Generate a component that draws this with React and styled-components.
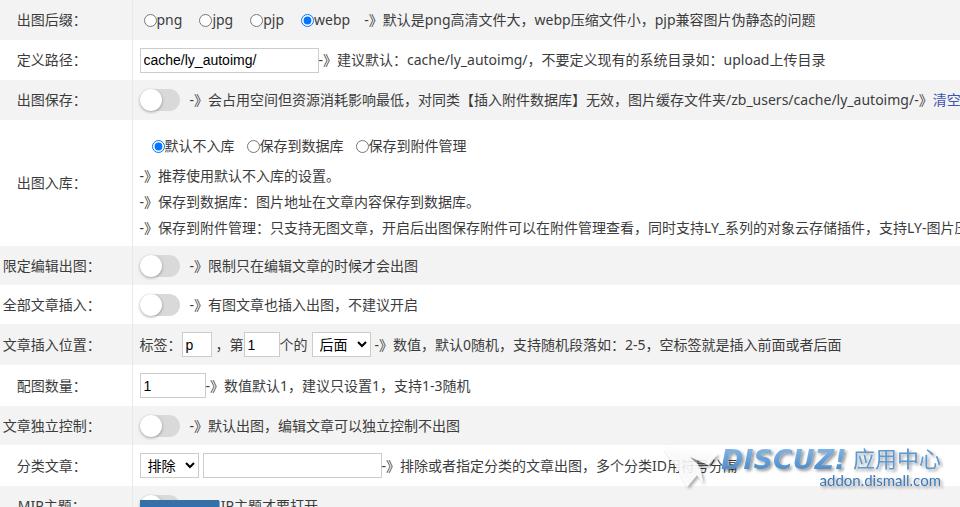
import React from 'react';
import styled, { createGlobalStyle } from 'styled-components';

const GlobalStyle = createGlobalStyle`
  body {
    margin: 0;
    overflow: hidden;
    background: #fff;
    color: #3c3c3c;
    font: 14px/20px "Noto Sans", "Noto Sans CJK SC", sans-serif;
  }
`;

const Table = styled.table`
  width: 100%;
  table-layout: fixed;
  border-collapse: collapse;
`;
const LabelColumn = styled.col`
  width: 132px;
`;
const Row = styled.tr`
  height: ${(p) => p.$height || 40}px;

  &:nth-child(odd) {
    background: #f3f3f3;
  }
`;
const LabelCell = styled.th`
  padding: 0 28px 0 0;
  border-right: 1px solid #e8e8e8;
  font-weight: 400;
  white-space: nowrap;
`;
const Cell = styled.td`
  padding: 0 0 0 7px;
  white-space: nowrap;
`;
const Line = styled.div`
  display: flex;
  align-items: center;
  gap: ${(p) => p.$gap || 0}px;
`;
const RadioGroup = styled.div`
  display: flex;
  align-items: center;
  gap: ${(p) => p.$gap}px;
  padding-left: ${(p) => p.$indent}px;
`;
const RadioLabel = styled.label`
  display: flex;
  align-items: center;

  input {
    width: 13px;
    height: 13px;
    margin: 0;
  }
`;
const Notes = styled.div`
  display: grid;
  gap: 6px;
  padding-top: 8px;

  ${RadioGroup} {
    padding-bottom: 4px;
  }
`;
const TextInput = styled.input`
  box-sizing: border-box;
  width: ${(p) => p.$width}px;
  height: 25px;
  padding: 0 3px;
  border: 1px solid #ccc;
  background: #fff;
  color: #000;
  font: 14px "Liberation Sans", sans-serif;
`;
const Select = styled.select`
  box-sizing: border-box;
  width: 59px;
  height: 25px;
  padding: 0 3px;
  border: 1px solid #ccc;
  border-radius: 0;
  background: #fff;
  color: #000;
  font: 14px "Liberation Sans", "Noto Sans CJK SC", sans-serif;
`;
const Switch = styled.input`
  appearance: none;
  display: flex;
  flex-shrink: 0;
  width: 40px;
  height: 22px;
  margin: 0;
  border-radius: 11px;
  background: #d9d9d9;

  &::before {
    content: '';
    width: 22px;
    height: 22px;
    border-radius: 50%;
    background: #fff;
    box-shadow: 0 1px 3px rgba(0, 0, 0, 0.35);
  }
  &:checked {
    justify-content: flex-end;
    background: #3a6ea5;
  }
`;
const Link = styled.a`
  color: #3a55b0;
  text-decoration: none;
`;
const SaveBar = styled.div`
  position: fixed;
  bottom: 0;
  left: 140px;
  height: 7px;
  overflow: hidden;
`;
const SaveButton = styled.button`
  width: 79px;
  height: 30px;
  border: 0;
  background: #3670a6;
`;
const Watermark = styled.svg`
  position: fixed;
  right: 10px;
  bottom: 10px;
  width: 290px;
  height: 54px;
  overflow: visible;
  pointer-events: none;
`;

const SwitchRow = ({ id, label, height = 39, children }) => (
  <Row $height={height}>
    <LabelCell scope="row"><label htmlFor={id}>{label}</label></LabelCell>
    <Cell>
      <Line $gap={10}>
        <Switch type="checkbox" role="switch" id={id} />
        <span>{children}</span>
      </Line>
    </Cell>
  </Row>
);

const Radios = ({ name, options, checked, gap, indent }) => (
  <RadioGroup role="radiogroup" $gap={gap} $indent={indent}>
    {options.map((option) => (
      <RadioLabel key={option}>
        <input type="radio" name={name} defaultChecked={option === checked} />
        {option}
      </RadioLabel>
    ))}
  </RadioGroup>
);

const AddonLogo = () => (
  <Watermark viewBox="0 0 290 54" aria-label="Discuz! 应用中心">
    <defs>
      <linearGradient id="brand" x1="0" y1="0" x2="0" y2="1">
        <stop offset="0" stopColor="#8dbde8" />
        <stop offset="1" stopColor="#4282c2" />
      </linearGradient>
      <filter id="shade" x="-10%" y="-20%" width="120%" height="150%">
        <feDropShadow dx="2" dy="2" stdDeviation="1.5" floodColor="#000" floodOpacity="0.4" />
      </filter>
    </defs>
    <g filter="url(#shade)">
      <path d="M3 5 L58 11 L48 22 L30 14 L40 24 L43 40 L37 32 L27 44 L18 27 Z" fill="#fff" fillOpacity="0.85" />
      <path d="M30 14 L48 22 L41 24 Z" fill="#555" fillOpacity="0.5" />
      <text x="61" y="26" fill="url(#brand)" fontFamily="DejaVu Sans, sans-serif" fontSize="27" fontWeight="700" fontStyle="italic">DISCUZ!</text>
      <text x="281" y="24" fill="#5b98d2" textAnchor="end" fontFamily="Noto Sans CJK SC, sans-serif" fontSize="22">应用中心</text>
      <text x="281" y="43" fill="#3e78b4" textAnchor="end" fontFamily="Lato, sans-serif" fontSize="15">addon.dismall.com</text>
    </g>
  </Watermark>
);

const App = () => (
  <>
    <GlobalStyle />
    <form>
      <Table>
        <colgroup>
          <LabelColumn />
          <col />
        </colgroup>
        <tbody>
          <Row>
            <LabelCell scope="row">出图后缀：</LabelCell>
            <Cell>
              <Line $gap={14}>
                <Radios name="suffix" options={['png', 'jpg', 'pjp', 'webp']} checked="webp" gap={17} indent={4} />
                <span>-》默认是png高清文件大，webp压缩文件小，pjp兼容图片伪静态的问题</span>
              </Line>
            </Cell>
          </Row>
          <Row>
            <LabelCell scope="row"><label htmlFor="path">定义路径：</label></LabelCell>
            <Cell>
              <Line>
                <TextInput id="path" $width={179} defaultValue="cache/ly_autoimg/" />
                <span>-》建议默认：cache/ly_autoimg/，不要定义现有的系统目录如：upload上传目录</span>
              </Line>
            </Cell>
          </Row>
          <SwitchRow id="save" label="出图保存：" height={40}>
            -》会占用空间但资源消耗影响最低，对同类【插入附件数据库】无效，图片缓存文件夹/zb_users/cache/ly_autoimg/-》<Link href="#clear">清空</Link>
          </SwitchRow>
          <Row $height={126}>
            <LabelCell scope="row">出图入库：</LabelCell>
            <Cell>
              <Notes>
                <Radios name="store" options={['默认不入库', '保存到数据库', '保存到附件管理']} checked="默认不入库" gap={12} indent={12} />
                <span>-》推荐使用默认不入库的设置。</span>
                <span>-》保存到数据库：图片地址在文章内容保存到数据库。</span>
                <span>-》保存到附件管理：只支持无图文章，开启后出图保存附件可以在附件管理查看，同时支持LY_系列的对象云存储插件，支持LY-图片压</span>
              </Notes>
            </Cell>
          </Row>
          <SwitchRow id="editOnly" label="限定编辑出图：">-》限制只在编辑文章的时候才会出图</SwitchRow>
          <SwitchRow id="all" label="全部文章插入：">-》有图文章也插入出图，不建议开启</SwitchRow>
          <Row $height={41}>
            <LabelCell scope="row">文章插入位置：</LabelCell>
            <Cell>
              <Line>
                <Line $gap={4}>
                  <Line>
                    <label htmlFor="tag">标签：</label>
                    <TextInput id="tag" $width={30} defaultValue="p" />
                  </Line>
                  <label htmlFor="nth">，第</label>
                </Line>
                <TextInput id="nth" $width={36} defaultValue="1" />
                <Line $gap={4}>
                  <label htmlFor="side">个的</label>
                  <Select id="side"><option>后面</option><option>前面</option></Select>
                  <span>-》数值，默认0随机，支持随机段落如：2-5，空标签就是插入前面或者后面</span>
                </Line>
              </Line>
            </Cell>
          </Row>
          <Row $height={41}>
            <LabelCell scope="row"><label htmlFor="count">配图数量：</label></LabelCell>
            <Cell>
              <Line>
                <TextInput id="count" $width={66} defaultValue="1" />
                <span>-》数值默认1，建议只设置1，支持1-3随机</span>
              </Line>
            </Cell>
          </Row>
          <SwitchRow id="single" label="文章独立控制：">-》默认出图，编辑文章可以独立控制不出图</SwitchRow>
          <Row $height={41}>
            <LabelCell scope="row"><label htmlFor="mode">分类文章：</label></LabelCell>
            <Cell>
              <Line>
                <Line $gap={4}>
                  <Select id="mode"><option>排除</option><option>指定</option></Select>
                  <TextInput aria-label="分类ID" $width={179} />
                </Line>
                <span>-》排除或者指定分类的文章出图，多个分类ID用符号分隔</span>
              </Line>
            </Cell>
          </Row>
          <SwitchRow id="mip" label="MIP主题：">-》MIP主题才要打开</SwitchRow>
        </tbody>
      </Table>
      <SaveBar><SaveButton type="submit" aria-label="保存" /></SaveBar>
    </form>
    <AddonLogo />
  </>
);

export default App;
